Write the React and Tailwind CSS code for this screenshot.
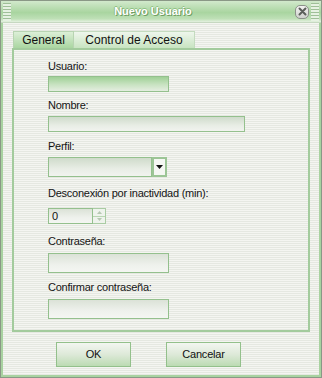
import React from 'react';

const stripes =
  'bg-[repeating-linear-gradient(to_bottom,#f4f5f1_0px,#f4f5f1_1px,#e5e8e1_1px,#e5e8e1_2px)]';

const Label = ({ children, className = '' }) => (
  <div className={`h-[13px] text-[11px] leading-[13px] tracking-[-0.25px] text-[#141414] ${className}`}>
    {children}
  </div>
);

const Field = ({ className = '', tone = 'plain' }) => {
  const bg =
    tone === 'focus'
      ? 'bg-[linear-gradient(to_bottom,#9fd096,#c9e3c2_55%,#e4ede0)]'
      : tone === 'soft'
      ? 'bg-[linear-gradient(to_bottom,#cfdbcb,#e8ede5_60%,#f1f3ef)]'
      : 'bg-[linear-gradient(to_bottom,#dbe2d7,#eef1ec_60%,#f4f6f2)]';
  return <div className={`border border-[#94c08d] ${bg} ${className}`} />;
};

const Grip = () => (
  <div className="w-[8px] h-[18px] bg-[repeating-linear-gradient(to_bottom,#9fbf98_0px,#9fbf98_1px,#e6f1e2_1px,#e6f1e2_3px)]" />
);

const App = () => {
  return (
    <div className="w-[322px] h-[378px] bg-white" style={{ fontFamily: '"Liberation Sans", Arial, sans-serif' }}>
      <div className="w-[322px] h-[378px] border border-[#8a9886] flex flex-col">
        {/* barra de título */}
        <div className="h-[22px] flex items-center justify-between px-[2px] border-b border-[#c6d8c1] bg-[linear-gradient(to_bottom,#d2e9cc,#a9d5a0_55%,#bfe0b7_85%,#e4f1e0)]">
          <Grip />
          <div className="flex-1 text-center font-bold text-[11px] text-white [text-shadow:1px_1px_0_#6f9e63,-1px_0_0_#8fc084,0_-1px_0_#8fc084]">
            Nuevo Usuario
          </div>
          <div className="flex items-center gap-[2px]">
            <div className="w-[14px] h-[14px] rounded-[5px] border border-[#8c918a] bg-[linear-gradient(to_bottom,#f3f3f1,#cfd2cd)] flex items-center justify-center">
              <svg width="9" height="9" viewBox="0 0 9 9">
                <path d="M1.5 1.5 L7.5 7.5 M7.5 1.5 L1.5 7.5" stroke="#5b5f5a" strokeWidth="2" strokeLinecap="round" />
              </svg>
            </div>
            <Grip />
          </div>
        </div>

        {/* cuerpo */}
        <div className={`flex-1 flex flex-col border-x-2 border-b-2 border-[#a8d2a0] pl-[9px] pr-[8px] pt-[8px] ${stripes}`}>
          <div className="flex ml-[1px] h-[17px]">
            <div className="w-[61px] flex items-center justify-center text-[12px] text-[#111] border border-b-0 border-[#b8d4b2] bg-[linear-gradient(to_bottom,#dcefd7,#aad6a1)]">
              General
            </div>
            <div className="w-[121px] flex items-center justify-center text-[12px] text-[#111] border border-b-0 border-l-0 border-[#c4dbbf] bg-[linear-gradient(to_bottom,#eef6ec,#c8e4c1)]">
              Control de Acceso
            </div>
          </div>

          <div className={`w-[298px] h-[284px] border-2 border-[#a3cb9d] pl-[34px] flex flex-col ${stripes}`}>
            <Label className="mt-[10px]">Usuario:</Label>
            <Field tone="focus" className="mt-[3px] w-[121px] h-[16px]" />

            <Label className="mt-[7px]">Nombre:</Label>
            <Field tone="soft" className="mt-[4px] w-[197px] h-[16px]" />

            <Label className="mt-[8px]">Perfil:</Label>
            <div className="mt-[4px] flex h-[20px]">
              <Field tone="soft" className="w-[104px] h-[20px]" />
              <div className="w-[15px] h-[20px] border-2 border-[#9cc596] bg-[#f5f7f3] flex items-center justify-center">
                <svg width="7" height="4" viewBox="0 0 7 4">
                  <path d="M0 0 H7 L3.5 4 Z" fill="#111" />
                </svg>
              </div>
            </div>

            <Label className="mt-[10px]">Desconexión por inactividad (min):</Label>
            <div className="mt-[8px] flex h-[16px]">
              <div className="w-[45px] h-[16px] border border-[#94c08d] bg-[linear-gradient(to_bottom,#dbe2d7,#eef1ec_60%,#f4f6f2)] pl-[3px] text-[11px] leading-[14px] text-[#111]">
                0
              </div>
              <div className="w-[13px] h-[16px] border border-l-0 border-[#a9cca3] flex flex-col">
                <div className="flex-1 flex items-center justify-center border-b border-[#b9d6b3] bg-[#eef3ec]">
                  <svg width="5" height="3" viewBox="0 0 5 3">
                    <path d="M0 3 H5 L2.5 0 Z" fill="#b6c8b2" />
                  </svg>
                </div>
                <div className="flex-1 flex items-center justify-center bg-[#eef3ec]">
                  <svg width="5" height="3" viewBox="0 0 5 3">
                    <path d="M0 0 H5 L2.5 3 Z" fill="#b6c8b2" />
                  </svg>
                </div>
              </div>
            </div>

            <Label className="mt-[11px]">Contraseña:</Label>
            <Field className="mt-[5px] w-[121px] h-[20px]" />

            <Label className="mt-[8px]">Confirmar contraseña:</Label>
            <Field className="mt-[5px] w-[121px] h-[20px]" />
          </div>

          {/* botones */}
          <div className="flex ml-[44px] mt-[10px] gap-[35px]">
            <button className="w-[75px] h-[25px] border border-[#93c08b] bg-[linear-gradient(to_bottom,#f3f6f1,#dde9d8_50%,#bcdbb3)] text-[11px] tracking-[-0.2px] text-[#111]">
              OK
            </button>
            <button className="w-[75px] h-[25px] border border-[#93c08b] bg-[linear-gradient(to_bottom,#f3f6f1,#dde9d8_50%,#bcdbb3)] text-[11px] tracking-[-0.2px] text-[#111]">
              Cancelar
            </button>
          </div>
        </div>
      </div>
    </div>
  );
};

export default App;
